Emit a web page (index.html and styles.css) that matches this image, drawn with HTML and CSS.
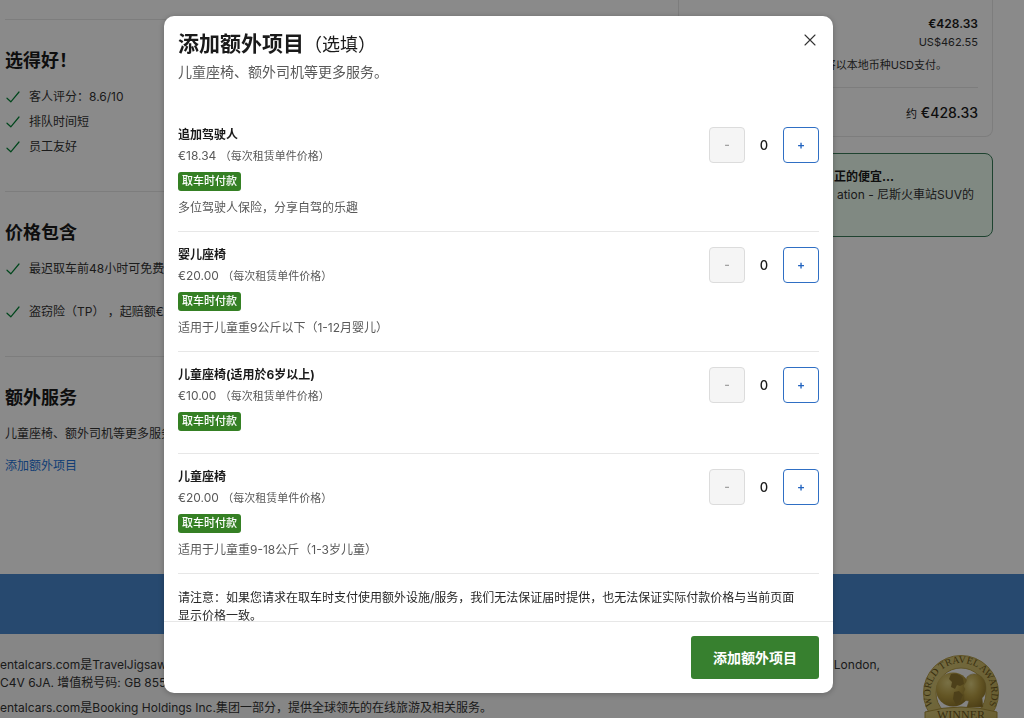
FILE: index.html
```html
<!DOCTYPE html>
<html lang="zh-CN">
<head>
<meta charset="utf-8">
<meta name="viewport" content="width=device-width, initial-scale=1">
<title>添加额外项目</title>
<link rel="stylesheet" href="styles.css">
</head>
<body>
<svg class="defs" aria-hidden="true">
  <symbol id="tick" viewBox="0 0 14 14"><path d="M1 8.2 4.8 11.8 13 2" fill="none" stroke="currentColor" stroke-width="1.2" stroke-linecap="round" stroke-linejoin="round"/></symbol>
</svg>

<div class="page">
  <main class="columns">
    <div class="details">
      <section class="block">
        <h2>选得好！</h2>
        <ul class="ticks">
          <li><svg class="tick"><use href="#tick"/></svg>客人评分：8.6/10</li>
          <li><svg class="tick"><use href="#tick"/></svg>排队时间短</li>
          <li><svg class="tick"><use href="#tick"/></svg>员工友好</li>
        </ul>
      </section>
      <section class="block">
        <h2>价格包含</h2>
        <ul class="ticks loose">
          <li><svg class="tick"><use href="#tick"/></svg>最迟取车前48小时可免费取消</li>
          <li><svg class="tick"><use href="#tick"/></svg>盗窃险（TP） ，起赔额€</li>
        </ul>
      </section>
      <section class="block">
        <h2>额外服务</h2>
        <p class="lead">儿童座椅、额外司机等更多服务。</p>
        <a class="link" href="#extras">添加额外项目</a>
      </section>
    </div>
    <aside class="summary">
      <div class="card price-card">
        <p class="price">€428.33</p>
        <p class="local">US$462.55</p>
        <p class="currency">将以本地币种USD支付。</p>
        <p class="total"><small>约</small> €428.33</p>
      </div>
      <div class="card deal-card">
        <p class="deal-title">正的便宜...</p>
        <p>ation - 尼斯火車站SUV的</p>
      </div>
    </aside>
  </main>
  <div class="band"></div>
  <footer class="footer">
    <div class="legal">
      <p class="address"><span>entalcars.com是TravelJigsaw</span><span>London,</span></p>
      <p>C4V 6JA. 增值税号码: GB 855</p>
      <p class="group">entalcars.com是Booking Holdings Inc.集团一部分，提供全球领先的在线旅游及相关服务。</p>
    </div>
    <svg class="seal" viewBox="0 0 76 76" role="img" aria-label="World Travel Awards Winner">
      <defs>
        <linearGradient id="gold" x1="0" y1="0" x2="1" y2="1"><stop offset="0" stop-color="#d9c97c"/><stop offset="1" stop-color="#bda752"/></linearGradient>
        <radialGradient id="globe" cx=".35" cy=".3" r=".8"><stop offset="0" stop-color="#e0d080"/><stop offset=".5" stop-color="#b89e44"/><stop offset="1" stop-color="#8a7026"/></radialGradient>
        <path id="arc" d="M13.4 56.5A30.5 30.5 0 1 1 62.6 56.5"/>
      </defs>
      <circle cx="38" cy="38" r="37.5" fill="url(#gold)" stroke="#b39c4a"/>
      <circle cx="38" cy="38" r="25" fill="#f4f4f4" stroke="#b39c4a"/>
      <circle cx="30" cy="34.5" r="17" fill="url(#globe)"/>
      <path d="M28 19q7-2 12 4l1 6-4 2-3-1-2 4-4-2 1-5-3-3zM31 37l5-1 4 4-3 7-4 3-3-6z" fill="#8f7730"/>
      <path d="M44 22q5-5 12-2 7 4 7 13 0 7-4 10l1 9H44l2-6-5-1v-5l-1-2 2-4-2-3 3-4z" fill="url(#globe)" stroke="#9d863a" stroke-width=".5"/>
      <path d="M2 57q36-10 72 0v13q-36-8-72 0z" fill="url(#gold)" stroke="#a58d38"/>
      <text class="seal-ring"><textPath href="#arc" startOffset="50%" text-anchor="middle">WORLD TRAVEL AWARDS</textPath></text>
      <text class="seal-word" x="38" y="64" text-anchor="middle">WINNER</text>
    </svg>
  </footer>
</div>

<div class="overlay">
  <div class="modal" id="extras" role="dialog" aria-modal="true" aria-labelledby="modal-title">
    <div class="modal-body">
      <header class="modal-head">
        <div>
          <h1 id="modal-title">添加额外项目<span>（选填）</span></h1>
          <p>儿童座椅、额外司机等更多服务。</p>
        </div>
        <button class="close" type="button" aria-label="关闭"><svg viewBox="0 0 12 12"><path d="M1 1 11 11M11 1 1 11" fill="none" stroke="currentColor" stroke-width="1.1" stroke-linecap="round"/></svg></button>
      </header>

      <ul class="extras">
        <li class="extra">
          <div class="info">
            <h3>追加驾驶人</h3>
            <p class="rate">€18.34 <small>（每次租赁单件价格）</small></p>
            <span class="tag">取车时付款</span>
            <p class="desc">多位驾驶人保险，分享自驾的乐趣</p>
          </div>
          <div class="stepper"><button type="button" disabled aria-label="减少">-</button><output>0</output><button type="button" aria-label="增加">+</button></div>
        </li>
        <li class="extra">
          <div class="info">
            <h3>婴儿座椅</h3>
            <p class="rate">€20.00 <small>（每次租赁单件价格）</small></p>
            <span class="tag">取车时付款</span>
            <p class="desc">适用于儿童重9公斤以下（1-12月婴儿）</p>
          </div>
          <div class="stepper"><button type="button" disabled aria-label="减少">-</button><output>0</output><button type="button" aria-label="增加">+</button></div>
        </li>
        <li class="extra">
          <div class="info">
            <h3>儿童座椅(适用於6岁以上)</h3>
            <p class="rate">€10.00 <small>（每次租赁单件价格）</small></p>
            <span class="tag">取车时付款</span>
            <p class="desc"></p>
          </div>
          <div class="stepper"><button type="button" disabled aria-label="减少">-</button><output>0</output><button type="button" aria-label="增加">+</button></div>
        </li>
        <li class="extra">
          <div class="info">
            <h3>儿童座椅</h3>
            <p class="rate">€20.00 <small>（每次租赁单件价格）</small></p>
            <span class="tag">取车时付款</span>
            <p class="desc">适用于儿童重9-18公斤（1-3岁儿童）</p>
          </div>
          <div class="stepper"><button type="button" disabled aria-label="减少">-</button><output>0</output><button type="button" aria-label="增加">+</button></div>
        </li>
      </ul>
      <p class="note">请注意：如果您请求在取车时支付使用额外设施/服务，我们无法保证届时提供，也无法保证实际付款价格与当前页面<br>显示价格一致。</p>
    </div>
    <footer class="modal-foot"><button class="submit" type="button">添加额外项目</button></footer>
  </div>
</div>
</body>
</html>
```
FILE: styles.css
```css
* { box-sizing: border-box; }
body, h1, h2, h3, p, ul { margin: 0; padding: 0; }
ul { list-style: none; }
body {
  height: 100vh;
  overflow: hidden;
  background: #fff;
  color: #333;
  font: 12px/18px Inter, "Noto Sans CJK SC", sans-serif;
}
button { font: inherit; cursor: pointer; }
small { line-height: 1; }
.defs { display: none; }

/* Page behind the dialog */
.page { height: 100vh; overflow: hidden; }
.columns {
  display: grid;
  grid-template-columns: minmax(0, 1fr) 315px;
  gap: 16px;
  padding-right: 31px;
}
.details { padding: 19px 0 96px 5px; }
.block { padding: 29px 0 32px; border-top: 1px solid #e7e7e7; }
.block:last-child { padding-bottom: 0; }
.block h2 { font-size: 18px; line-height: 24px; color: #1a1a1a; font-weight: 600; }
.ticks { display: grid; margin-top: 11px; line-height: 25px; }
.ticks.loose { gap: 18px; }
.ticks li { display: flex; align-items: center; gap: 9px; padding-left: 1px; white-space: nowrap; }
.tick { width: 14px; height: 14px; color: #008234; }
.lead { margin: 12px 0 8px; line-height: 24px; }
.link { display: inline-block; line-height: 24px; color: #2273d8; text-decoration: none; }

.summary { display: grid; gap: 16px; align-content: start; text-align: right; }
.card { border: 1px solid #e7e7e7; border-radius: 8px; padding: 14px; }
.price-card { border-top: 0; border-radius: 0 0 8px 8px; padding-bottom: 13px; }
.price { line-height: 20px; font-weight: 600; color: #1a1a1a; }
.local { font-size: 11px; line-height: 16px; }
.currency { margin-top: 6px; padding: 0 31px 13px 0; font-size: 11px; }
.total { border-top: 1px solid #e7e7e7; padding-top: 15px; font-size: 14px; line-height: 20px; color: #1a1a1a; font-weight: 500; }
.total small { font-size: 11px; font-weight: 400; }
.deal-card { background: #edfdf1; border-color: #3a7d5a; padding: 14px 18px 32px 14px; }
.deal-title { font-weight: 700; color: #1a1a1a; padding-right: 80px; }

.band { height: 60px; background: #4887cd; }
.footer { display: flex; justify-content: space-between; background: #f7f7f7; padding: 21px 25px 40px 0; }
.legal { flex: 0 1 880px; padding-top: 1px; }
.address { display: flex; justify-content: space-between; }
.group { margin-top: 7px; }
.seal { width: 76px; height: 76px; flex: none; }
.seal-ring, .seal-word { font-family: "Liberation Serif", serif; fill: #6b5820; }
.seal-ring { font-size: 10px; }
.seal-word { font-size: 12px; }

/* Dialog */
.overlay {
  position: fixed;
  inset: 0;
  display: flex;
  justify-content: center;
  padding: 16px 27px 25px 0;
  background: rgba(0, 0, 0, .46);
}
.modal {
  display: flex;
  flex-direction: column;
  width: min(669px, 94%);
  border-radius: 10px;
  overflow: hidden;
  background: #fff;
  box-shadow: 0 1px 6px rgba(0, 0, 0, .25);
}
.modal-body { flex: 1; min-height: 0; overflow: hidden; padding: 14px; }
.modal-head { display: flex; justify-content: space-between; align-items: flex-start; }
.modal-head h1 { font-size: 21px; line-height: 28px; font-weight: 600; color: #1a1a1a; }
.modal-head h1 span { font-size: 18px; line-height: 1; font-weight: 400; }
.modal-head p { margin-top: 4px; font-size: 14px; line-height: 20px; color: #595959; }
.close { display: grid; place-items: center; width: 18px; height: 20px; padding: 0; border: 0; background: none; color: #333; }
.close svg { width: 12px; height: 12px; }
.extras { margin-top: 30px; }
.extra { display: flex; justify-content: space-between; padding: 14px 0; border-bottom: 1px solid #e7e7e7; }
.info { display: grid; justify-items: start; }
.info h3 { font-size: 12px; line-height: 18px; font-weight: 700; color: #1a1a1a; }
.rate { margin: 3px 0 7px; color: #595959; }
.rate small { font-size: 11px; }
.tag { padding: 0 4px; border-radius: 3px; background: #358024; color: #fff; font-size: 11px; line-height: 19px; font-weight: 500; }
.desc { margin-top: 8px; color: #595959; }
.stepper { display: grid; grid-template-columns: 36px 38px 36px; align-self: flex-start; align-items: center; padding-top: 1px; text-align: center; }
.stepper output { font-size: 13px; font-weight: 500; color: #1a1a1a; }
.stepper button { height: 36px; padding: 0; border: 1px solid #2f6fc4; border-radius: 4px; background: #fff; color: #2264c0; font-weight: 600; }
.stepper button:disabled { border-color: #dcdcdc; background: #f5f5f5; color: #a2a2a2; }
.note { margin-top: 15px; color: #262626; }
.modal-foot { display: flex; justify-content: flex-end; padding: 14px; border-top: 1px solid #e7e7e7; }
.submit { padding: 11px 22px; border: 0; border-radius: 3px; background: #37802f; color: #fff; font-size: 14px; line-height: 21px; font-weight: 600; }
```
